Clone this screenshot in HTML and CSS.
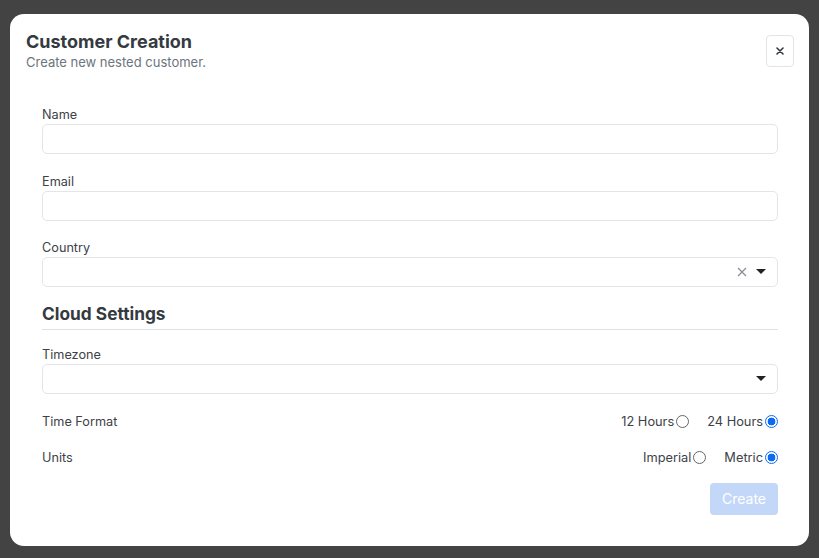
FILE: index.html
```html
<!DOCTYPE html>
<html>
<head>
<meta charset="utf-8">
<link rel="stylesheet" href="styles.css">
</head>
<body>
<div class="modal">
  <div class="modal-header">
    <div class="titles">
      <div class="title">Customer Creation</div>
      <div class="subtitle">Create new nested customer.</div>
    </div>
    <button class="close" aria-label="Close">
      <svg width="8" height="8" viewBox="0 0 8 8"><path d="M1 1L7 7M7 1L1 7" stroke="#343a40" stroke-width="1.6" stroke-linecap="round"/></svg>
    </button>
  </div>
  <div class="modal-body">
    <div class="field">
      <label class="label">Name</label>
      <div class="input"></div>
    </div>
    <div class="field">
      <label class="label">Email</label>
      <div class="input"></div>
    </div>
    <div class="field">
      <label class="label">Country</label>
      <div class="input select">
        <svg class="clear" width="10" height="10" viewBox="0 0 10 10"><path d="M1 1L9 9M9 1L1 9" stroke="#8a8f94" stroke-width="1.3"/></svg>
        <svg class="caret" width="10" height="6" viewBox="0 0 10 6"><path d="M0 0H10L5 5Z" fill="#222"/></svg>
      </div>
    </div>
    <div class="section">Cloud Settings</div>
    <div class="field">
      <label class="label">Timezone</label>
      <div class="input select">
        <svg class="caret" width="10" height="6" viewBox="0 0 10 6"><path d="M0 0H10L5 5Z" fill="#222"/></svg>
      </div>
    </div>
    <div class="row">
      <span class="label">Time Format</span>
      <div class="options">
        <span class="opt">12 Hours<span class="radio"></span></span>
        <span class="opt">24 Hours<span class="radio on"></span></span>
      </div>
    </div>
    <div class="row last">
      <span class="label">Units</span>
      <div class="options">
        <span class="opt">Imperial<span class="radio"></span></span>
        <span class="opt">Metric<span class="radio on"></span></span>
      </div>
    </div>
    <div class="actions">
      <button class="create">Create</button>
    </div>
  </div>
</div>
</body>
</html>
```
FILE: styles.css
```css
* { box-sizing: border-box; }
html, body {
  margin: 0;
  padding: 0;
  background: #434343;
  font-family: Inter, "Noto Sans", sans-serif;
  color: #343a40;
}
body { padding: 14px 10px 12px; }
.modal {
  background: #fff;
  border-radius: 14px;
  height: 532px;
}
.modal-header {
  display: flex;
  justify-content: space-between;
  align-items: flex-start;
  padding: 17px 15px 0 16px;
}
.title {
  font-size: 18px;
  font-weight: 700;
  line-height: 22px;
  color: #343a40;
}
.subtitle {
  font-size: 13px;
  line-height: 18px;
  color: #6c757d;
}
.close {
  margin-top: 4px;
  width: 28px;
  height: 32px;
  border: 1px solid #e1e4e8;
  border-radius: 4px;
  background: #fff;
  display: flex;
  align-items: center;
  justify-content: center;
  padding: 0;
}
.modal-body {
  padding: 36px 31px 0 32px;
}
.field { display: flex; flex-direction: column; margin-bottom: 19.5px; }
.label {
  font-size: 12.7px;
  line-height: 16px;
  color: #3d4247;
}
.field .label { margin-bottom: 1px; }
.input {
  height: 30px;
  border: 1px solid #e2e5e9;
  border-radius: 5px;
  background: #fff;
}
.select {
  display: flex;
  align-items: center;
  justify-content: flex-end;
  padding-right: 11px;
}
.clear { margin-right: 9px; }
.field:nth-child(3) { margin-bottom: 15px; }
.section {
  font-size: 17.3px;
  font-weight: 700;
  line-height: 22px;
  padding-top: 1px;
  padding-bottom: 4px;
  border-bottom: 1px solid #dee2e6;
  margin-bottom: 17px;
  color: #343a40;
}
.row {
  display: flex;
  justify-content: space-between;
  align-items: center;
  height: 16px;
  margin-bottom: 20px;
}
.row.last { margin-bottom: 0; }
.options { display: flex; gap: 18px; }
.opt {
  display: flex;
  align-items: center;
  font-size: 12.8px;
  line-height: 16px;
  color: #3d4247;
}
.radio {
  width: 13px;
  height: 13px;
  border-radius: 50%;
  border: 1px solid #666;
  margin-left: 2px;
  display: inline-block;
}
.radio.on {
  border: 1px solid #0b6bf5;
  background: radial-gradient(circle, #0b6bf5 0 3.6px, #fff 4.2px);
}
.actions {
  display: flex;
  justify-content: flex-end;
  margin-top: 17px;
}
.create {
  width: 68px;
  height: 32px;
  border: none;
  border-radius: 4px;
  background: #c3d7f8;
  color: #fff;
  font-family: Inter, sans-serif;
  font-size: 14px;
}
```
